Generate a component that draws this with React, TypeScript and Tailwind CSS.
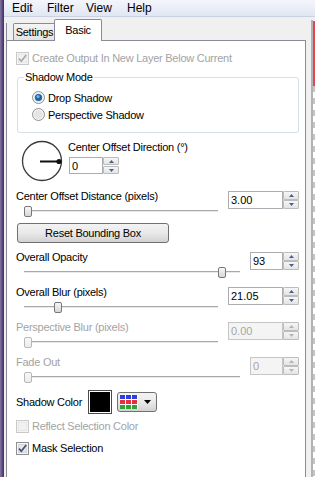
import React from "react";

function Check({ checked, disabled }: { checked?: boolean; disabled?: boolean }) {
  return (
    <svg width="13" height="13" viewBox="0 0 13 13" className="shrink-0">
      <rect x="0.5" y="0.5" width="12" height="12" fill={disabled ? "#f4f4f4" : "#f6f6f6"} stroke={disabled ? "#c9c9c9" : "#8e8f8f"} />
      <rect x="2.5" y="2.5" width="8" height="8" fill={disabled ? "#f1f1f1" : "#e6e6e6"} stroke={disabled ? "#e6e6e6" : "#d6d6d6"} />
      {checked && (
        <path d="M3 6.6 L5.3 9.2 L10.2 3" fill="none" stroke={disabled ? "#a9a9a9" : "#3d4f7e"} strokeWidth="1.7" />
      )}
    </svg>
  );
}

function Radio({ checked }: { checked?: boolean }) {
  return (
    <svg width="13" height="13" viewBox="0 0 13 13" className="shrink-0">
      <circle cx="6.5" cy="6.5" r="6" fill="#f3f3f3" stroke="#8e8f8f" />
      <circle cx="6.5" cy="6.5" r="4.3" fill="#e4e4e4" />
      {checked && (
        <>
          <circle cx="6.5" cy="6.5" r="3.6" fill="#1d63a8" />
          <circle cx="6" cy="5.6" r="1.6" fill="#6fb2e6" />
        </>
      )}
    </svg>
  );
}

function Tri({ up, color }: { up?: boolean; color: string }) {
  return (
    <svg width="5" height="3" viewBox="0 0 5 3">
      <path d={up ? "M0 3 L2.5 0 L5 3 Z" : "M0 0 L2.5 3 L5 0 Z"} fill={color} />
    </svg>
  );
}

function Spin({ value, boxW, disabled, small }: { value: string; boxW: string; disabled?: boolean; small?: boolean }) {
  const tri = disabled ? "#b4b4b4" : "#4d5f8e";
  const h = small ? "h-[17px]" : "h-[18px]";
  const bh = small ? "h-[8px]" : "h-[9px]";
  return (
    <div className={`flex ${h}`}>
      <div
        className={`${boxW} ${h} border border-[#abadb3] flex items-center pl-[2px] tracking-normal ${
          disabled ? "bg-[#f4f4f4] text-[#a6a6a6] border-[#c6c6c6]" : "bg-white"
        }`}
      >
        {value}
      </div>
      <div className={`w-[16px] ${h} flex flex-col justify-between`}>
        <div className={`${bh} border border-[#bcbcbc] rounded-[1px] bg-gradient-to-b from-[#f6f6f6] to-[#e4e4e4] flex items-center justify-center`}>
          <Tri up color={tri} />
        </div>
        <div className={`${bh} border border-[#bcbcbc] rounded-[1px] bg-gradient-to-b from-[#f6f6f6] to-[#e4e4e4] flex items-center justify-center`}>
          <Tri color={tri} />
        </div>
      </div>
    </div>
  );
}

function Slider({ frac, disabled, trackW }: { frac: number; disabled?: boolean; trackW: number }) {
  const left = Math.round(frac * (trackW - 8));
  return (
    <div className="relative h-[14px] ml-[8px] mr-[10px]">
      <div className="absolute left-0 right-0 top-[7px] h-[2px] border-t border-[#a9a9a9] border-b border-b-[#e9e9e9]" />
      <div
        className={`absolute top-[3px] w-[8px] h-[11px] rounded-[2px] border bg-gradient-to-b ${
          disabled ? "border-[#b8b8b8] from-[#f8f8f8] to-[#ececec]" : "border-[#777] from-[#f8f8f8] to-[#d6d6d6]"
        }`}
        style={{ left }}
      />
    </div>
  );
}

function SliderRow({
  label,
  value,
  disabled,
  frac,
  narrow,
  className,
}: {
  label: string;
  value: string;
  disabled?: boolean;
  frac: number;
  narrow?: boolean;
  className: string;
}) {
  return (
    <div className={`flex ${className}`}>
      <div className="flex-1 flex flex-col pl-[9px]">
        <span className={`h-[14px] ${disabled ? "text-[#a3a3a3]" : ""}`}>{label}</span>
        <Slider frac={frac} disabled={disabled} trackW={narrow ? 217 : 194} />
      </div>
      <div className="mt-[2px] mr-[6px]">
        <Spin value={value} boxW={narrow ? "w-[33px]" : "w-[55px]"} disabled={disabled} />
      </div>
    </div>
  );
}

function Dial() {
  return (
    <svg width="42" height="42" viewBox="0 0 42 42" className="shrink-0">
      <circle cx="21" cy="21" r="19.5" fill="none" stroke="#3a3a3a" strokeWidth="1.3" />
      <line x1="19" y1="21.5" x2="38" y2="21.5" stroke="#111" strokeWidth="2" />
      <circle cx="38" cy="21.5" r="2.6" fill="#111" />
    </svg>
  );
}

function ColorGrid() {
  const cols = [0, 6, 12];
  const rows: [number, string][] = [
    [0, "#2f3fdc"],
    [5, "#e2333b"],
    [10, "#35a03a"],
  ];
  return (
    <svg width="18" height="14" viewBox="0 0 18 14" className="shrink-0">
      <rect x="0" y="0" width="18" height="14" fill="#fff" />
      {rows.map(([y, c]) => cols.map((x) => <rect key={`${x}-${y}`} x={x} y={y} width="5" height="4" fill={c} />))}
    </svg>
  );
}

export default function App() {
  return (
    <div className="flex w-[315px] h-[477px] overflow-hidden bg-[#f0f0f0] text-black text-[11px] leading-[14px] tracking-[-0.25px] font-['Liberation_Sans',Arial,sans-serif]">
      <div className="w-[4px] shrink-0 bg-gradient-to-r from-[#86769f] via-[#5f4f86] to-[#3c2d62]" />
      <div className="flex-1 flex flex-col min-w-0">
        <div className="h-[17px] shrink-0 flex items-center border-b border-[#c9d1e2] bg-gradient-to-b from-[#f4f6fb] to-[#e0e6f3] text-[12px] tracking-normal">
          <span className="ml-[8px] w-[35px]">Edit</span>
          <span className="w-[39px]">Filter</span>
          <span className="w-[41px]">View</span>
          <span>Help</span>
        </div>
        <div className="flex flex-1 min-h-0">
          <div className="w-[2px] shrink-0" />
          <div className="w-[300px] shrink-0 flex flex-col">
            <div className="h-[23px] shrink-0 flex items-end">
              <div className="w-px h-[17px] bg-[#898c95]" />
              <div className="w-[6px]" />
              <div className="w-[43px] h-[17px] border border-b-0 border-[#898c95] bg-gradient-to-b from-[#f5f5f5] to-[#e3e3e3] flex items-center justify-center rounded-t-[2px]">
                Settings
              </div>
              <div className="relative z-10 -ml-[2px] -mb-px w-[48px] h-[22px] border border-b-0 border-[#898c95] bg-white flex items-start justify-center pt-[3px] rounded-t-[2px]">
                Basic
              </div>
            </div>
            <div className="h-[450px] shrink-0 border border-[#898c95] bg-white flex flex-col">
              <div className="mt-[10px] ml-[9px] flex items-center h-[14px] text-[#a3a3a3]">
                <Check checked disabled />
                <span className="ml-[3px]">Create Output In New Layer Below Current</span>
              </div>

              <div className="relative mt-[12px] ml-[10px] mr-[6px] rounded-[3px] border border-[#d5dfe5] pt-[11px] pb-[9px] pl-[14px]">
                <span className="absolute top-[-8px] left-[6px] bg-white px-[1px]">Shadow Mode</span>
                <div className="flex items-center h-[17px]">
                  <Radio checked />
                  <span className="ml-[3px]">Drop Shadow</span>
                </div>
                <div className="flex items-center h-[17px]">
                  <Radio />
                  <span className="ml-[3px]">Perspective Shadow</span>
                </div>
              </div>

              <div className="mt-[7px] ml-[14px] flex">
                <Dial />
                <div className="ml-[5px] flex flex-col">
                  <span className="h-[14px]">Center Offset Direction (°)</span>
                  <div className="mt-[3px] ml-px">
                    <Spin value="0" boxW="w-[34px]" small />
                  </div>
                </div>
              </div>

              <SliderRow className="mt-[7px]" label="Center Offset Distance (pixels)" value="3.00" frac={0} />

              <div className="mt-[6px] ml-[10px] w-[152px] h-[20px] rounded-[3px] border border-[#707070] bg-gradient-to-b from-[#f3f3f3] via-[#e9e9e9] to-[#d2d2d2] flex items-center justify-center">
                Reset Bounding Box
              </div>

              <SliderRow className="mt-[7px]" label="Overall Opacity" value="93" frac={0.93} narrow />
              <SliderRow className="mt-[7px]" label="Overall Blur (pixels)" value="21.05" frac={0.163} />
              <SliderRow className="mt-[7px]" label="Perspective Blur (pixels)" value="0.00" frac={0} disabled />
              <SliderRow className="mt-[7px]" label="Fade Out" value="0" frac={0} disabled narrow />

              <div className="mt-[7px] ml-[9px] flex items-center h-[24px]">
                <span className="w-[72px]">Shadow Color</span>
                <div className="w-[24px] h-[24px] border border-[#4a4a4a] bg-white p-px">
                  <div className="w-full h-full bg-black" />
                </div>
                <div className="ml-[5px] w-[40px] h-[20px] rounded-[3px] border border-[#707070] bg-gradient-to-b from-[#f3f3f3] via-[#e9e9e9] to-[#d2d2d2] flex items-center pl-[2px]">
                  <ColorGrid />
                  <svg width="7" height="4" viewBox="0 0 7 4" className="ml-[6px]">
                    <path d="M0 0 L3.5 4 L7 0 Z" fill="#000" />
                  </svg>
                </div>
              </div>

              <div className="mt-[5px] ml-[9px] flex items-center h-[14px] text-[#a3a3a3]">
                <Check disabled />
                <span className="ml-[3px]">Reflect Selection Color</span>
              </div>
              <div className="mt-[8px] ml-[9px] flex items-center h-[14px]">
                <Check checked />
                <span className="ml-[3px]">Mask Selection</span>
              </div>
            </div>
          </div>
          <div className="w-[5px] shrink-0" />
          <div className="w-[2px] shrink-0 mt-[3px] bg-[#b3b3b3]" />
          <div className="w-[2px] shrink-0 mt-[4px] flex flex-col">
            <div className="h-[65px] bg-[#e5434f]" />
            <div className="h-[6px] bg-[#c4c4c4]" />
            <div className="flex-1 bg-[repeating-linear-gradient(180deg,#ffffff_0px,#ffffff_6px,#c4c4c4_6px,#c4c4c4_12px)]" />
          </div>
        </div>
      </div>
    </div>
  );
}
